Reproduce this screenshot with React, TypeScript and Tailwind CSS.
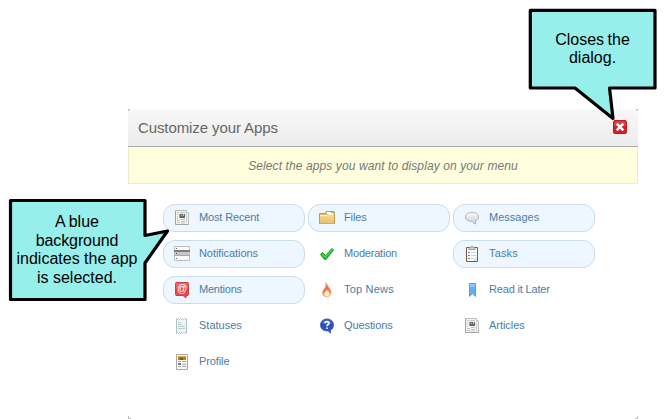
import type { ReactNode } from "react";

function Icon({ children }: { children: ReactNode }) {
  return (
    <svg className="block h-4 w-4 shrink-0 overflow-visible" viewBox="0 0 16 16">
      {children}
    </svg>
  );
}

function NewsIcon() {
  return (
    <Icon>
      <path d="M1.5.5h11v2h2v12h-13z" fill="#f4f4f2" stroke="#bdbdbb" />
      <path d="M1.5 1v13.5h13" fill="none" stroke="#a2a2a0" />
      <path d="M12.5 3v10" stroke="#d0d0ce" />
      <path d="M3 2.5h2M3 4.5h1M3 6.5h1M3 8.5h1M3 10.5h3M3 12.5h3M6 2.5h5M7 9.5h4M7 11.5h4M7 13h4" stroke="#c4c4c2" />
      <path d="M5 4h1v4H5z" fill="#a5a5a3" />
      <path d="M6 4h5v4H6z" fill="#666664" />
      <path d="M7 5h1v1H7zM9 4h1v2H9z" fill="#c9c9c7" />
    </Icon>
  );
}

function ListIcon() {
  return (
    <Icon>
      <path d="M.5.5h15v14H.5z" fill="#fafafa" stroke="#bcbcbc" />
      <path d="M0 4h16v2H0z" fill="#7c7c7c" />
      <path d="M0 6h16v3H0z" fill="#c7c5c5" />
      <path d="M0 9h16v1H0z" fill="#aaa" />
      <path d="M2 2.5h1M2 12.5h1" stroke="#666" />
      <path d="M2 7.5h1" stroke="#444" />
    </Icon>
  );
}

function MentionIcon() {
  return (
    <Icon>
      <path d="M2 .5h12l.5 1v11l-.5 1h-2V16l-3-2.5H2l-.5-1v-11z" fill="#e5474d" stroke="#d13e44" />
      <path d="M2 1h12v5H2z" fill="#f48585" opacity=".5" />
      <text x="8" y="10" textAnchor="middle" fontSize="10" fill="#fff">@</text>
    </Icon>
  );
}

function ReceiptIcon() {
  return (
    <Icon>
      <path d="m2.5.5 1 1 1-1 1 1 1-1 1 1 1-1 1 1 1-1 1 1 1-1v15l-1-1-1 1-1-1-1 1-1-1-1 1-1-1-1 1-1-1-1 1z" fill="#eef6f3" stroke="#a9bcb9" strokeWidth=".9" />
      <path d="M4 4.5h3M4 6.5h4M4 8.5h7M4 10.5h7" stroke="#acc0be" strokeWidth=".8" />
    </Icon>
  );
}

function ProfileIcon() {
  return (
    <Icon>
      <path d="M2.5.5h11v15h-11z" fill="#f6f6f2" stroke="#aaa9a5" />
      <path d="M4 2h8v4H4z" fill="#c67b1d" />
      <path d="M4 2.5h8" stroke="#dea349" />
      <path d="M6 4h3v2H6z" fill="#87500d" />
      <path d="M4 7.5h3M8 7.5h4M4 12.5h3M8 10.5h4M8 12.5h4" stroke="#aaa" />
      <path d="M4 9h3v2H4z" fill="#777" />
    </Icon>
  );
}

function FolderIcon() {
  return (
    <Icon>
      <path d="M.5 3.5h6l1-2H15l.5 1v11H.5z" fill="#e6bd66" stroke="#c69746" />
      <path d="M8 2h6v2H8z" fill="#fff" />
      <path d="M12 2.5h2" stroke="#50c4e8" />
      <path d="M1 5.5h7l1-1h6v9H1z" fill="url(#folder)" />
      <path d="M1 5.5h7l1-1h6" fill="none" stroke="#fff0b9" />
      <defs>
        <linearGradient id="folder" x2="0" y2="1">
          <stop stopColor="#f6dc9a" />
          <stop offset="1" stopColor="#e4be6c" />
        </linearGradient>
      </defs>
    </Icon>
  );
}

function CheckIcon() {
  return (
    <Icon>
      <path d="m1.5 8.5 2-2 3 3L13 2.5l1.5 1.5L7 13.5H5.5z" fill="#26b936" stroke="#249d32" strokeLinejoin="round" />
      <path d="m3 8 3 3.2L13.5 3.5" fill="none" stroke="#5fdf5c" />
    </Icon>
  );
}

function FlameIcon() {
  return (
    <Icon>
      <path d="M6.5.8c2 1.4 2.2 3.2 3.7 5.2 1.2 1.5 2 3 1.8 5-.3 2.4-2.1 3.8-4.2 3.8-2.5 0-4.4-1.6-4.4-4C3.4 7.8 8.3 5.4 6.5.8z" fill="url(#flame)" stroke="#f4a48b" strokeWidth=".8" />
      <path d="M8 6.8c.3 2.2-2.7 2.6-2.7 4.9 0 1.6 1.2 2.5 2.6 2.5 1.6 0 2.9-1 2.8-2.6-.1-1.6-1.5-1.9-1.3-3.4-.8.4-1 1-.9 1.5" fill="#fff3ae" />
      <defs>
        <linearGradient id="flame" x2="0" y2="1">
          <stop stopColor="#e0727a" />
          <stop offset=".6" stopColor="#f4694b" />
          <stop offset="1" stopColor="#fbc965" />
        </linearGradient>
      </defs>
    </Icon>
  );
}

function QuestionIcon() {
  return (
    <Icon>
      <path d="M8 1C4 1 1.5 3.5 1.5 6.9c0 3.7 2.7 6 6.5 6h1.4l2 2.4v-3c1.9-.9 3.1-2.8 3.1-5.4C14.5 3.5 12 1 8 1z" fill="#2a51bd" stroke="#4c6bc0" />
      <path d="M3 5C4 1.3 12 1.3 13 5 10 6.5 6 6.5 3 5z" fill="#6687dd" opacity=".65" />
      <path d="M5.8 5.2C6.2 3 10.2 3.1 10 5.4 9.8 6.8 8 6.7 8 8.2M8 9.5v1.6" fill="none" stroke="#fff" strokeWidth="1.6" />
    </Icon>
  );
}

function MessageIcon() {
  return (
    <Icon>
      <path d="M8 2.5c-4.2 0-6.5 1.8-6.5 4.5 0 2.8 2.5 4.3 6.4 4.3l2.5 2.6h1.4l-.3-3.2c2-.7 3-1.8 3-3.7 0-2.7-2.5-4.5-6.5-4.5z" fill="url(#bubble)" stroke="#b5b3ba" />
      <path d="M3 6c.5-2.5 9-2.8 10 0" fill="none" stroke="#fafafa" />
      <defs>
        <linearGradient id="bubble" x2="0" y2="1">
          <stop stopColor="#f8f8fa" />
          <stop offset="1" stopColor="#cdccd2" />
        </linearGradient>
      </defs>
    </Icon>
  );
}

function ClipboardIcon() {
  return (
    <Icon>
      <path d="M2.5 1.5h11v14h-11z" fill="#f7faf9" stroke="#85563f" />
      <path d="M5 3.5v-2h1.5l.5-1h2l.5 1H11v2z" fill="#d4d4d2" stroke="#888" strokeWidth=".8" />
      <path d="M4 6h2v1H4z" fill="#528bd7" />
      <path d="M4 9h2v1H4z" fill="#d35d58" />
      <path d="M4 12h2v1H4z" fill="#49b552" />
      <path d="M7 6.5h5M7 9.5h5M7 12.5h3" stroke="#cbd4d1" />
      <path d="m10 15 3-3" stroke="#b8c3bf" />
    </Icon>
  );
}

function BookmarkIcon() {
  return (
    <Icon>
      <path d="M5.5 1.5h6v13l-3-3-3 3z" fill="#62aff4" stroke="#5a9de0" />
      <path d="M6 2h5v3H6z" fill="#8ac8ff" />
    </Icon>
  );
}

type App = {
  label: string;
  icon: () => ReactNode;
  selected?: boolean;
  spacing?: string;
};

const apps: App[] = [
  { label: "Most Recent", icon: NewsIcon, selected: true, spacing: "tracking-[-0.15px]" },
  { label: "Files", icon: FolderIcon, selected: true, spacing: "tracking-[-0.1px]" },
  { label: "Messages", icon: MessageIcon, selected: true },
  { label: "Notifications", icon: ListIcon, selected: true, spacing: "tracking-[-0.08px]" },
  { label: "Moderation", icon: CheckIcon, spacing: "tracking-[-0.2px]" },
  { label: "Tasks", icon: ClipboardIcon, selected: true, spacing: "tracking-[0.15px]" },
  { label: "Mentions", icon: MentionIcon, selected: true, spacing: "tracking-[-0.22px]" },
  { label: "Top News", icon: FlameIcon, spacing: "tracking-[0.2px]" },
  { label: "Read it Later", icon: BookmarkIcon, spacing: "tracking-[-0.17px]" },
  { label: "Statuses", icon: ReceiptIcon },
  { label: "Questions", icon: QuestionIcon, spacing: "tracking-[-0.1px]" },
  { label: "Articles", icon: NewsIcon, spacing: "tracking-[-0.05px]" },
  { label: "Profile", icon: ProfileIcon, spacing: "tracking-[-0.1px]" },
];

function AppItem({ label, icon: Graphic, selected, spacing = "" }: App) {
  return (
    <button
      className={`flex h-7 w-[142px] items-center gap-[9px] rounded-xl border pl-[10px] text-left ${
        selected ? "border-[#c8dcec] bg-[#eef7ff]" : "border-transparent"
      }`}
    >
      <Graphic />
      <span className={`whitespace-nowrap pb-0.5 text-[11px] leading-4 text-[#4b7da4] ${spacing}`}>{label}</span>
    </button>
  );
}

function Callouts() {
  return (
    <>
      <div className="absolute left-0 top-[190px] h-[120px] w-[180px]">
        <svg className="absolute inset-0" width="180" height="120" viewBox="0 0 180 120">
          <path d="M10.5 10.5H145V45.5l22.5-4.5L145 73v36.5H10.5z" fill="#97efec" stroke="#000" strokeWidth="3.2" strokeLinejoin="round" />
        </svg>
        <p className="absolute left-[11px] top-[23px] w-[132px] text-center text-[16px] leading-[18.5px] text-black">
          <span>A</span><span className="ml-[3px]">blue</span><br />
          <span className="tracking-[-0.1px]">background</span><br />indicates the app<br />is selected.
        </p>
      </div>
      <div className="absolute left-[520px] top-0 h-[125px] w-[145px]">
        <svg className="absolute inset-0" width="145" height="125" viewBox="0 0 145 125">
          <path d="M10.3 10.3H135V88H89.5l3.5 30.5L55 88H10.3z" fill="#97efec" stroke="#000" strokeWidth="3.2" strokeLinejoin="round" />
        </svg>
        <p className="absolute left-[12px] top-[31px] w-[121px] text-center text-[16px] leading-[18px] text-black">
          <span className="[word-spacing:-1px]">Closes the</span><br />dialog.
        </p>
      </div>
    </>
  );
}

export default function AppDialog() {
  return (
    <main className="relative h-[419px] w-[665px] overflow-hidden bg-white pl-32 pt-[109px] font-['Liberation_Sans',Arial,sans-serif]">
      <section className="relative h-[310px] w-[510px]">
        <header className="flex h-[38px] items-center justify-between border-b border-[#aaa] bg-linear-to-b from-[#f8f8f8] to-[#ececec] pl-[10px] pr-[11px]">
          <h1 className="text-[15px] leading-5 tracking-[-0.1px] text-[#666]">Customize your Apps</h1>
          <button aria-label="Close" className="mb-px h-[14px] w-[14px]">
            <svg className="block" width="14" height="14" viewBox="0 0 14 14">
              <rect x=".5" y=".5" width="13" height="13" rx="1.5" fill="#d51f22" stroke="#b51b21" />
              <path d="M1 1h12v5H1z" fill="#ee5554" opacity=".5" />
              <path d="m3.7 3.7 6.6 6.6m0-6.6-6.6 6.6" stroke="#fff" strokeWidth="2.6" />
            </svg>
          </button>
        </header>
        <p className="flex h-[37px] items-center justify-center border border-t-0 border-[#ebebcd] bg-[#ffffdd] pt-px text-[12px] italic leading-4 tracking-[0.1px] text-[#777]">
          Select the apps you want to display on your menu
        </p>
        <div className="ml-[35px] mt-5 grid w-[432px] grid-cols-3 gap-x-[3px] gap-y-2">
          {apps.map((app) => <AppItem key={app.label} {...app} />)}
        </div>
        <svg className="pointer-events-none absolute inset-0" width="510" height="310" viewBox="0 0 510 310">
          <path d="M.5 2V.5H2M508 .5h1.5V2M.5 307v2.5H3M507 309.5h2.5V307" fill="none" stroke="#bbb" />
        </svg>
      </section>
      <Callouts />
    </main>
  );
}
